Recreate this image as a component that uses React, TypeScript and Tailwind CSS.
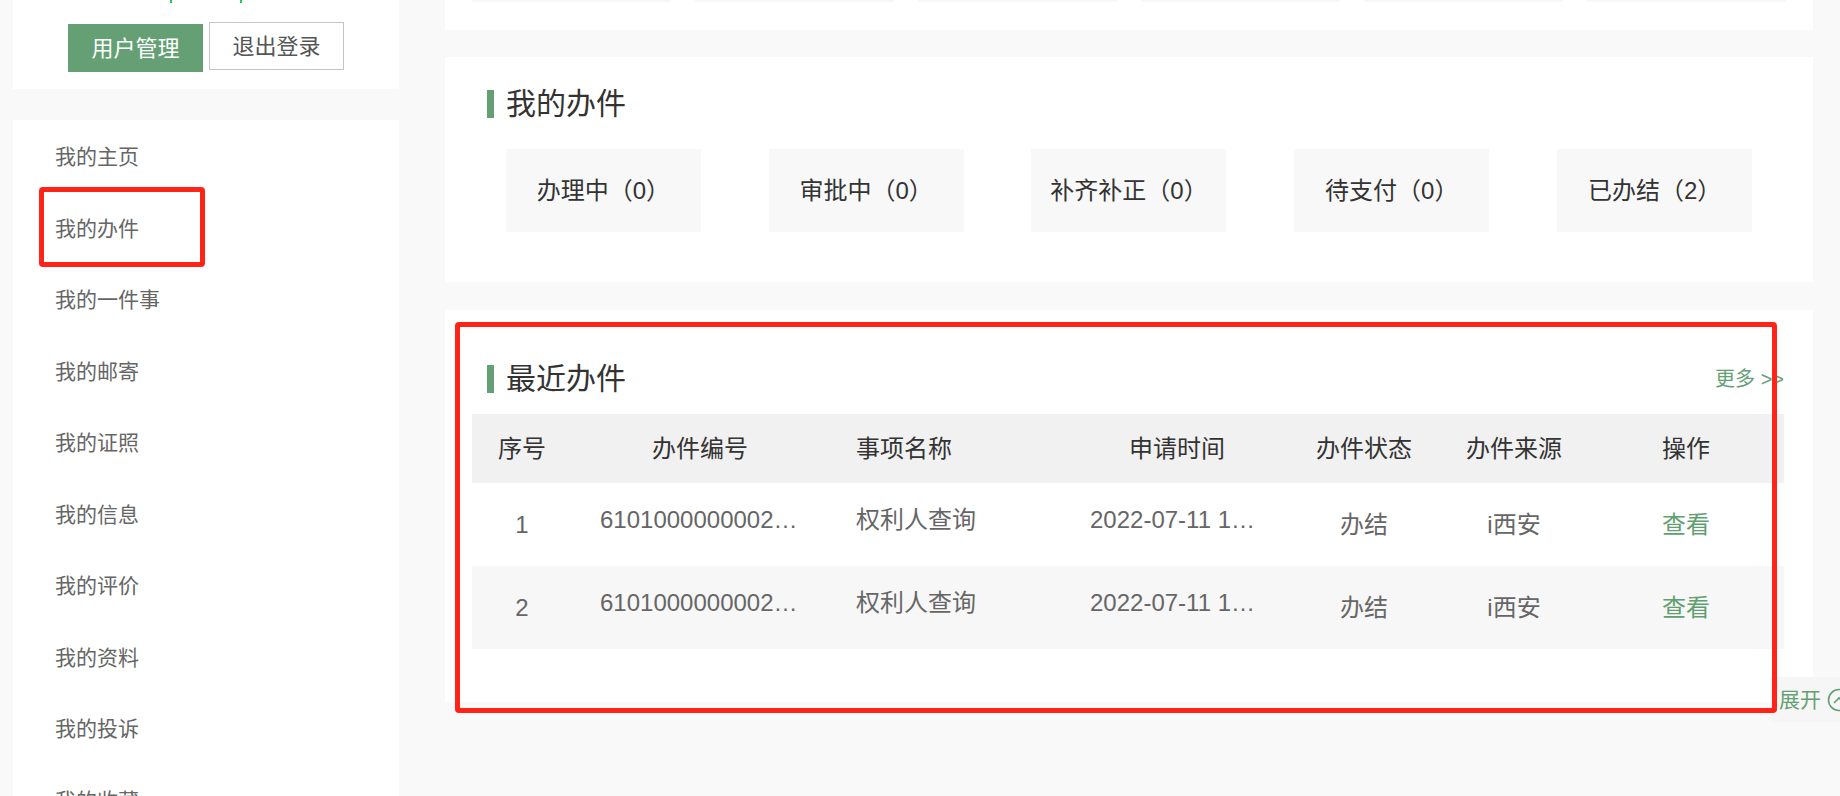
const menu = [
  "我的主页",
  "我的办件",
  "我的一件事",
  "我的邮寄",
  "我的证照",
  "我的信息",
  "我的评价",
  "我的资料",
  "我的投诉",
  "我的收藏",
];

const counts = [
  { label: "办理中", n: 0 },
  { label: "审批中", n: 0 },
  { label: "补齐补正", n: 0 },
  { label: "待支付", n: 0 },
  { label: "已办结", n: 2 },
];

const rows = [
  { no: 1, code: "610100000000212207110001", name: "权利人查询", time: "2022-07-11 10:21:33", status: "办结", src: "i西安", bg: "bg-white" },
  { no: 2, code: "610100000000212207110002", name: "权利人查询", time: "2022-07-11 10:08:47", status: "办结", src: "i西安", bg: "bg-[#f7f7f7]" },
];

function Heading({ title }: { title: string }) {
  return (
    <div className="flex items-center h-[28px] pl-[15px]">
      <span className="w-[7px] h-[28px] bg-[#64a074]" />
      <span className="ml-[12px] text-[30px] leading-[28px] text-[#333]">{title}</span>
    </div>
  );
}

export default function App() {
  return (
    <div className="relative flex h-[796px] w-[1840px] overflow-hidden bg-[#f9f9f9] font-['Liberation_Sans','Noto_Sans_CJK_SC',sans-serif]">
      {/* Sidebar */}
      <aside className="ml-[13px] w-[386px] flex flex-col">
        <div className="relative shrink-0 h-[89px] bg-white pt-[22px]">
          {/* bits of the green name line scrolled above */}
          <span className="absolute left-[157px] top-0 w-[2px] h-[3px] bg-[#22c55e]" />
          <span className="absolute left-[227px] top-0 w-[2px] h-[3px] bg-[#22c55e]" />
          <div className="flex items-start justify-center gap-[6px]">
            <button className="mt-[2px] w-[135px] h-[48px] bg-[#64a074] text-white text-[22px]">用户管理</button>
            <button className="w-[135px] h-[48px] border border-[#c4c4c4] bg-white text-[#555] text-[22px]">退出登录</button>
          </div>
        </div>
        <div className="mt-[31px] shrink-0 h-[760px] bg-white pt-[1px]">
          {menu.map((m) => (
            <div key={m} className="h-[71.5px] flex items-center pl-[42px] text-[21px] text-[#666]">
              {m}
            </div>
          ))}
        </div>
      </aside>

      {/* Main */}
      <main className="ml-[46px] w-[1368px] flex flex-col">
        <div className="-mt-[118px] shrink-0 bg-white px-[27px] pb-[28px]">
          <div className="grid grid-cols-6 gap-[24px]">
            {[0, 1, 2, 3, 4, 5].map((i) => (
              <div key={i} className="h-[120px] bg-[#f7f7f7]" />
            ))}
          </div>
        </div>

        <section className="mt-[27px] shrink-0 bg-white px-[27px] pt-[33px] pb-[50px]">
          <Heading title="我的办件" />
          <div className="mt-[31px] flex justify-around">
            {counts.map((c) => (
              <div key={c.label} className="w-[195px] h-[83px] bg-[#f8f8f8] flex items-center justify-center text-[24px] text-[#333]">
                {c.label}（{c.n}）
              </div>
            ))}
          </div>
        </section>

        <section className="mt-[28px] shrink-0 bg-white px-[27px] pt-[54px] pb-[53px]">
          <div className="flex items-center justify-between w-[1312px]">
            <Heading title="最近办件" />
            <a className="text-[20px] text-[#64a074]">更多 &gt;&gt;</a>
          </div>
          <div className="mt-[20px] w-[1312px] text-[24px]">
            <div className="grid grid-cols-[100px_256px_232px_234px_140px_160px_190px] h-[69px] items-center bg-[#f1f1f1] text-[#333]">
              <div className="text-center">序号</div>
              <div className="text-center">办件编号</div>
              <div className="pl-[28px]">事项名称</div>
              <div className="text-center">申请时间</div>
              <div className="text-center">办件状态</div>
              <div className="text-center">办件来源</div>
              <div className="text-center pr-[6px]">操作</div>
            </div>
            {rows.map((r) => (
              <div key={r.no} className={`grid grid-cols-[100px_256px_232px_234px_140px_160px_190px] h-[83px] items-center text-[#666] ${r.bg}`}>
                <div className="text-center">{r.no}</div>
                <div className="pb-[10px]">
                  <div className="mx-auto w-[200px] truncate">{r.code}</div>
                </div>
                <div className="pl-[28px] pb-[10px] truncate">{r.name}</div>
                <div className="pb-[10px]">
                  <div className="ml-[30px] w-[166px] truncate">{r.time}</div>
                </div>
                <div className="text-center">{r.status}</div>
                <div className="text-center">{r.src}</div>
                <div className="text-center pr-[6px] text-[#5f9f70]">查看</div>
              </div>
            ))}
          </div>
        </section>
      </main>

      {/* floating expand tab */}
      <div className="absolute left-[1770px] top-[677px] w-[90px] h-[45px] bg-[#f6f6f6] flex items-center pl-[9px] gap-[6px] text-[21px] text-[#64a074]">
        <span>展开</span>
        <svg width="24" height="24" viewBox="0 0 24 24" fill="none" stroke="#64a074" strokeWidth="1.6">
          <circle cx="12" cy="12" r="10.5" />
          <path d="M7 15l5-5 5 5" />
        </svg>
      </div>

      {/* red annotation boxes */}
      <div className="absolute left-[39px] top-[187px] w-[166px] h-[80px] border-[5px] border-[#ff2318] rounded-[4px] pointer-events-none" />
      <div className="absolute left-[455px] top-[322px] w-[1322px] h-[391px] border-[5px] border-[#ff2318] rounded-[4px] pointer-events-none" />
    </div>
  );
}
